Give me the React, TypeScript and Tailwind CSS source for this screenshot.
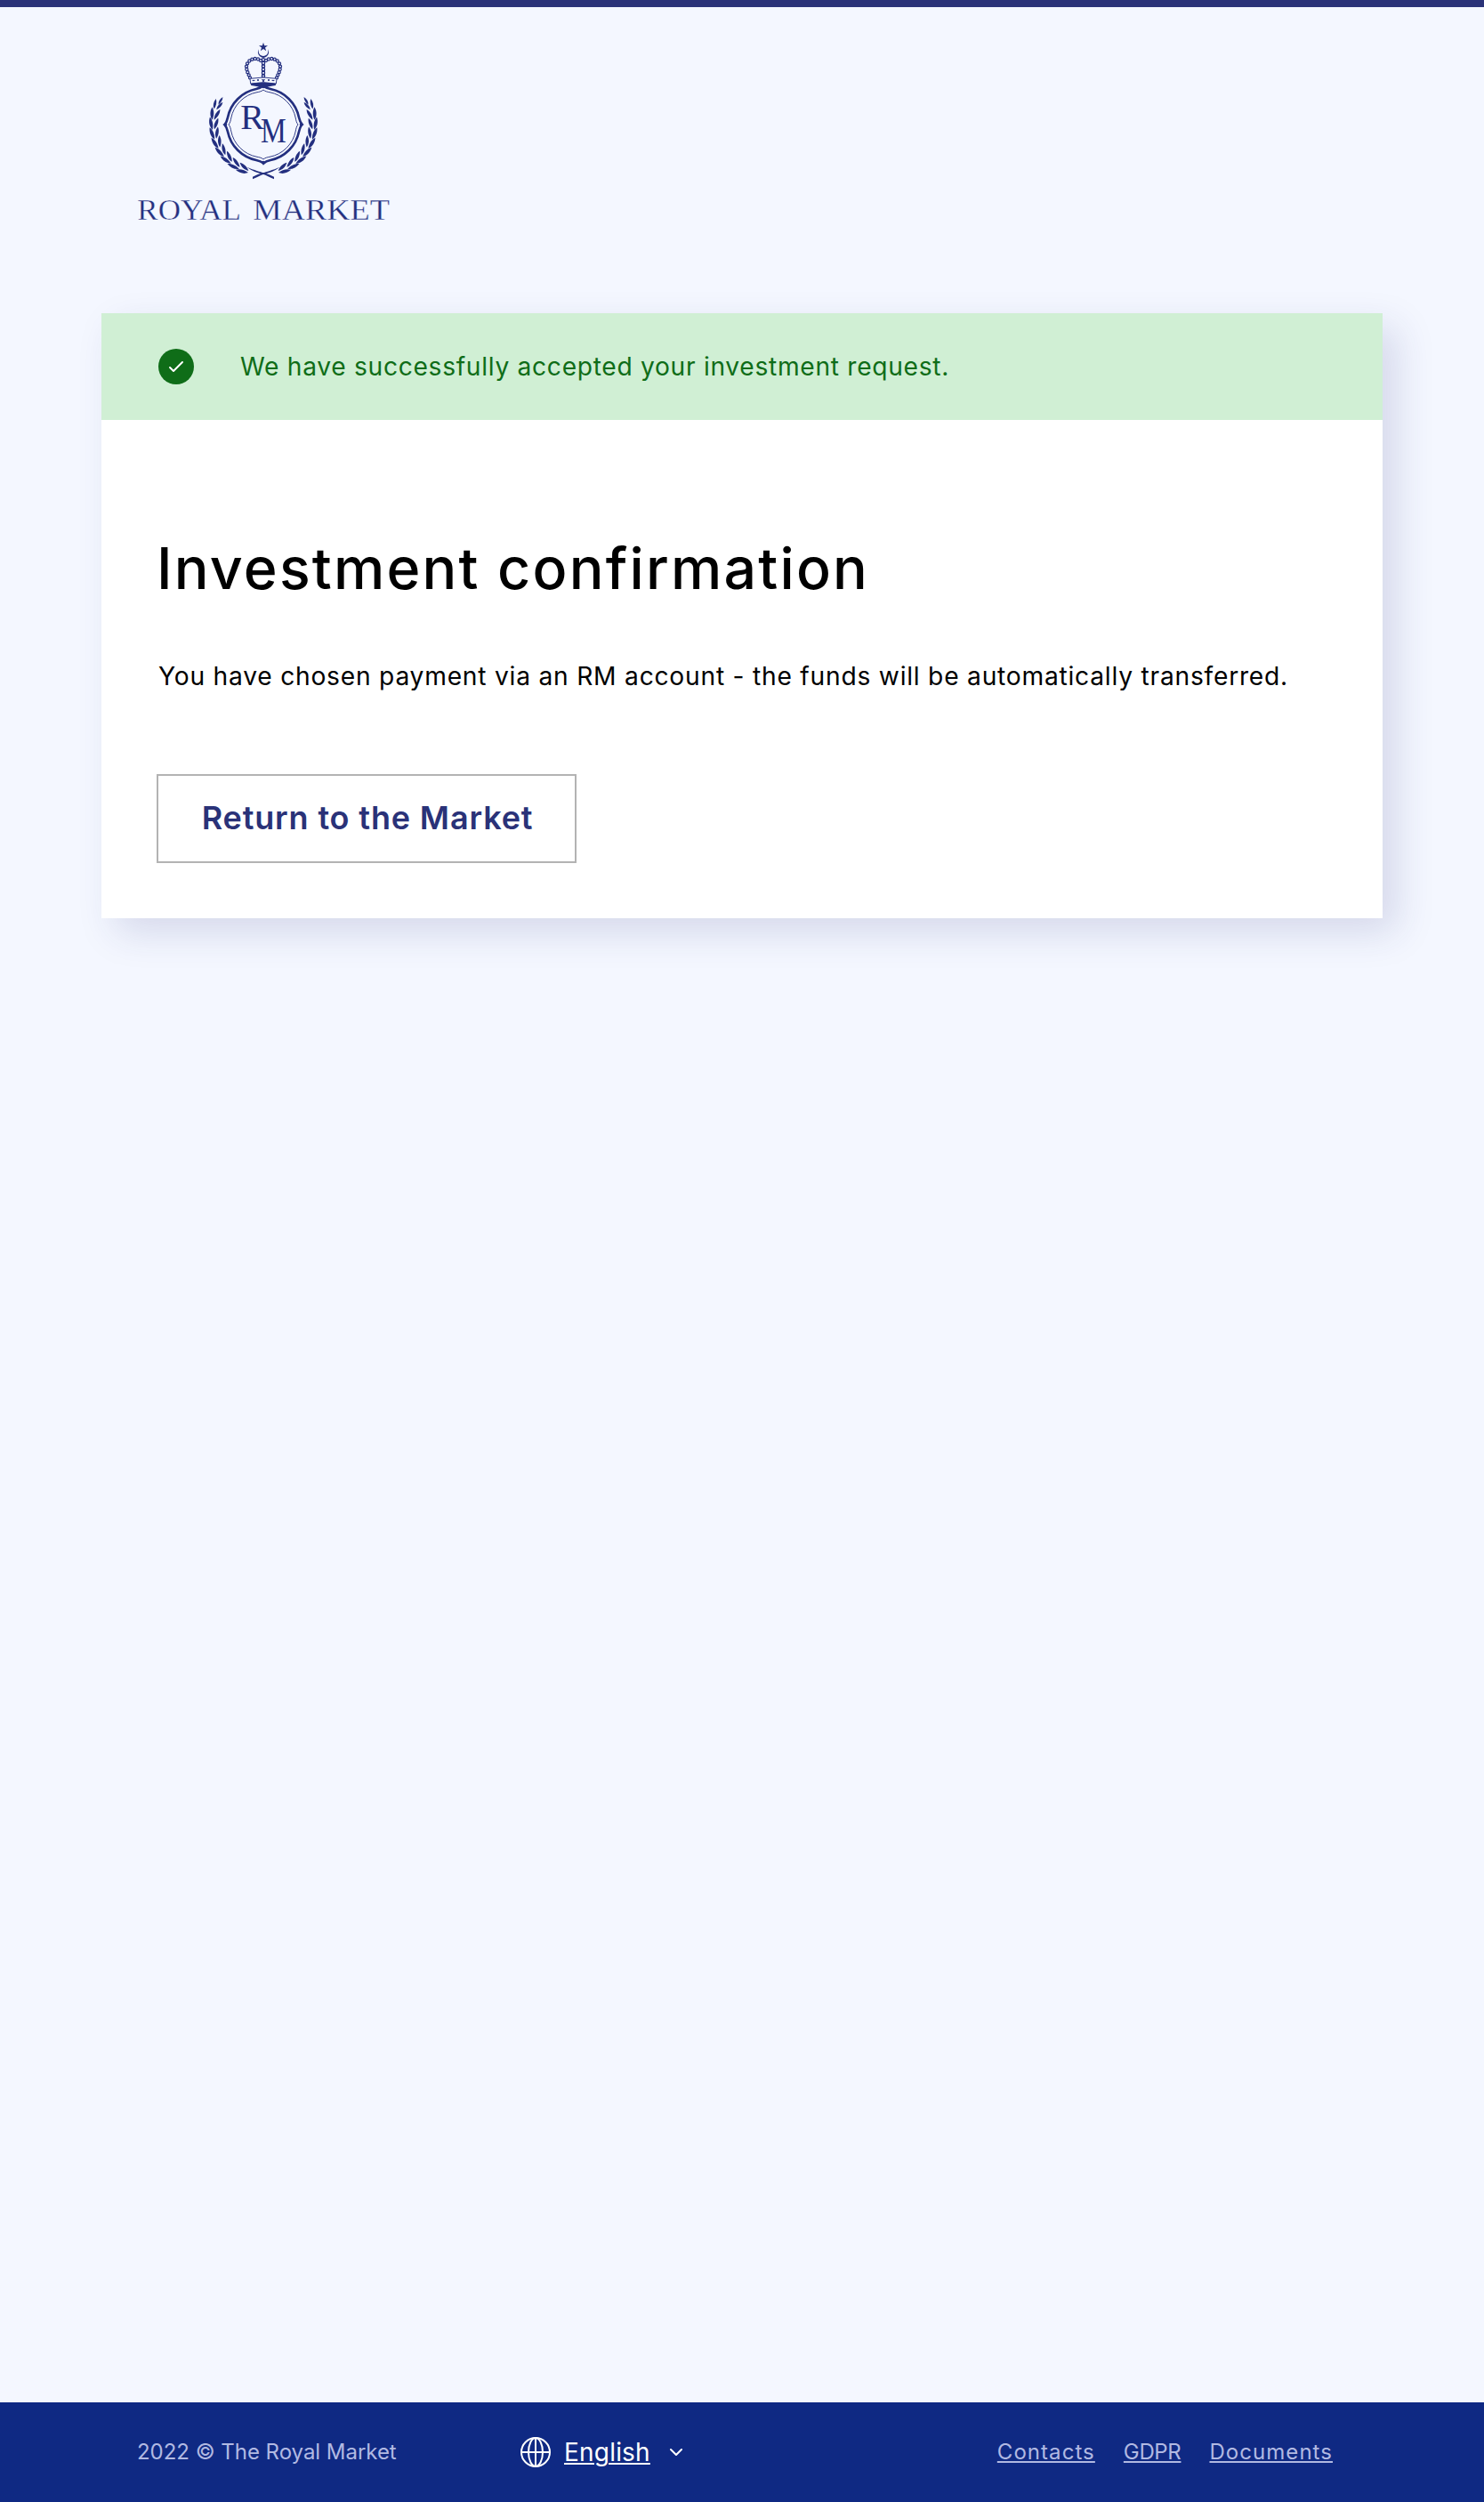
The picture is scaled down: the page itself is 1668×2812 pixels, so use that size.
import React from "react";

const NAVY = "#232f7f";

const beads: [number, number][] = [
  [219, 84], [210, 79.5], [200, 78], [190, 80], [181, 85.5], [174, 94], [171, 104],
  [172, 114], [175, 123.5], [179, 133], [183, 142],
];

const leaves = Array.from({ length: 9 }, (_, i) => {
  const angle = 202 - i * 11;
  const rad = (angle * Math.PI) / 180;
  return { angle, cx: Math.cos(rad), cy: Math.sin(rad), scale: i === 0 ? 0.95 : 1.18 };
});

const LEAF = "M0 -19 C7 -8 7 6 2 18 C-5.500 8 -6.500 -6 0 -19Z";

function LaurelBranch() {
  return (
    <g>
      {leaves.map((l) => (
        <g key={l.angle}>
          <path
            d={LEAF}
            transform={`translate(${228 + 177 * l.cx} ${297 + 177 * l.cy}) rotate(${l.angle - 180 - 8}) scale(${l.scale})`}
          />
          <path
            d={LEAF}
            transform={`translate(${228 + 160 * l.cx} ${297 + 160 * l.cy}) rotate(${l.angle - 180 + 22}) scale(${l.scale * 0.92})`}
          />
        </g>
      ))}
      <path d={LEAF} transform="translate(83 220) rotate(33) scale(0.8)" />
      <path d="M172 443 C198 454 218 459 230 463 C244 467 253 471 264 476 L264 484 C249 477 238 471 226 467 C208 462 190 457 172 443Z" />
    </g>
  );
}

function Crown() {
  return (
    <g>
      <path d="M228 23 L231.5 33.5 L243 33.5 L234 40.5 L237.5 51.5 L228 45 L218.500 51.5 L222 40.5 L213 33.5 L224.500 33.5Z" />
      <path d="M213 46 A18 18 0 1 0 243 46 C247 59 239 69 228 69 C217 69 209 59 213 46Z" />
      <g fill="#f4f7ff" stroke={NAVY} strokeWidth="3.800">
        {beads.map(([x, y]) => (
          <React.Fragment key={`${x}-${y}`}>
            <circle cx={x} cy={y} r="4.6" />
            <circle cx={456 - x} cy={y} r="4.6" />
          </React.Fragment>
        ))}
        {[92, 103, 114, 125, 136].map((y) => (
          <rect key={y} x="223.500" y={y - 4} width="9" height="9" rx="2" />
        ))}
        <circle cx="228" cy="82" r="5" />
        <path d="M183 145 Q228 137 273 145 L271 162 Q228 154 185 162Z" strokeWidth="2.800" />
      </g>
      <path d="M185 162 Q228 154 271 162 L269 168 Q248 171 241 174 L215 174 Q208 171 187 168Z" />
      <path d="M189 152 l6 -3 l6 2 l-6 3Z M267 152 l-6 -3 l-6 2 l6 3Z M221 148 h14 l-5 4 l2 5 l-4 -2 l-4 2 l2 -5Z" />
      <circle cx="210" cy="150" r="3.200" />
      <circle cx="246" cy="150" r="3.200" />
    </g>
  );
}

function Logo() {
  return (
    <svg className="block h-[220px] w-[290px]" viewBox="0 0 870 660" fill={NAVY} role="img" aria-label="Royal Market">
      <g transform="translate(198 0)">
        <LaurelBranch />
        <g transform="translate(456 0) scale(-1 1)">
          <LaurelBranch />
        </g>
        <g transform="translate(228 300)" fill="none" stroke={NAVY}>
          {[0, 90, 180, 270].map((a) => (
            <g key={a} transform={`rotate(${a})`}>
              <path d="M-1 -130 C7 -125 15 -122 24 -120 A123 123 0 0 1 120 -24 C122 -15 125 -7 131 0" strokeWidth="8" />
              <path d="M0 -117 C6 -112 14 -110 21 -109 A111 111 0 0 1 109 -21 C110 -14 112 -6 117 0" strokeWidth="2.800" />
              <path d="M-9 -126 L0 -137 L9 -126 L0 -122Z" fill={NAVY} stroke="none" />
            </g>
          ))}
        </g>
        <Crown />
        <g className="font-['Liberation_Serif']" fontSize="121">
          <text x="151" y="314" textLength="80" lengthAdjust="spacingAndGlyphs">R</text>
          <text x="219" y="360" textLength="86" lengthAdjust="spacingAndGlyphs">M</text>
        </g>
      </g>
      <g className="font-['Liberation_Serif']" fontSize="104" stroke="#f4f7ff" strokeWidth="1">
        <text x="1" y="621" textLength="350" lengthAdjust="spacingAndGlyphs">ROYAL</text>
        <text x="391" y="621" textLength="461" lengthAdjust="spacingAndGlyphs">MARKET</text>
      </g>
    </svg>
  );
}

function CheckBadge() {
  return (
    <span className="flex size-10 shrink-0 items-center justify-center rounded-full bg-[#0f6d18]">
      <svg className="h-[14px] w-[18px]" viewBox="0 0 18 14" fill="none" stroke="white" strokeWidth="2" strokeLinecap="round" strokeLinejoin="round">
        <path d="M2 8 L6 12 L16 2" />
      </svg>
    </span>
  );
}

function Globe() {
  return (
    <svg className="size-[34px] shrink-0" viewBox="0 0 34 34" fill="none" stroke="white" strokeWidth="2">
      <circle cx="17" cy="17" r="16" />
      <ellipse cx="17" cy="17" rx="8" ry="16" />
      <path d="M17 1 V33 M1 17 H33" />
    </svg>
  );
}

const link = "underline decoration-2 underline-offset-2 [text-decoration-skip-ink:none]";

export default function App() {
  return (
    <div className="flex h-[2812px] w-[1668px] flex-col border-t-8 border-[#2a3278] bg-[#f4f7ff] font-['Inter',sans-serif] text-black">
      <header className="h-[344px] pt-8 pl-[154px]">
        <Logo />
      </header>

      <main className="mx-[114px] h-[680px] w-[1440px] bg-white shadow-[16px_16px_40px_rgba(42,50,120,0.15)]">
        <div className="flex h-[120px] items-center gap-[52px] bg-[#d0efd4] pl-16 text-[#0f6d18]">
          <CheckBadge />
          <p className="text-[28.2px] tracking-[0.69px] whitespace-nowrap">
            We have successfully accepted your investment request.
          </p>
        </div>
        <div className="flex flex-col items-start pt-[127px] pl-16">
          <h1 className="-ml-[2px] text-[64.5px] leading-[80px] font-medium tracking-[2.2px] whitespace-nowrap">
            Investment confirmation
          </h1>
          <p className="mt-[61px] text-[28.2px] leading-10 tracking-[0.77px] whitespace-nowrap">
            You have chosen payment via an RM account - the funds will be automatically transferred.
          </p>
          <button className="mt-[90px] -ml-[2px] h-[100px] w-[472px] border-2 border-[#b3b3b3] pb-[2px] pl-[2px] text-[36px] font-semibold tracking-[0.85px] whitespace-nowrap text-[#2a3278]">
            Return to the Market
          </button>
        </div>
      </main>

      <footer className="mt-auto flex h-28 items-center bg-[#0f2983] pl-[154px] text-[24px] text-[#b1b9e2]">
        <p className="w-[431px] tracking-[-0.03px] whitespace-nowrap">2022 © The Royal Market</p>
        <button className="flex items-center text-[28px] text-white">
          <Globe />
          <span className="ml-[15px] w-[97px] text-left tracking-[0.2px] whitespace-nowrap underline decoration-2 underline-offset-2">English</span>
          <svg className="ml-[21px] h-[10px] w-4" viewBox="0 0 16 10" fill="none" stroke="white" strokeWidth="2" strokeLinecap="round" strokeLinejoin="round">
            <path d="M2 2 L8 8 L14 2" />
          </svg>
        </button>
        <nav className="mr-[170px] ml-auto flex gap-8">
          <a className={`${link} tracking-[1.06px]`}>Contacts</a>
          <a className={`${link} tracking-[-0.35px]`}>GDPR</a>
          <a className={`${link} tracking-[1.05px]`}>Documents</a>
        </nav>
      </footer>
    </div>
  );
}
